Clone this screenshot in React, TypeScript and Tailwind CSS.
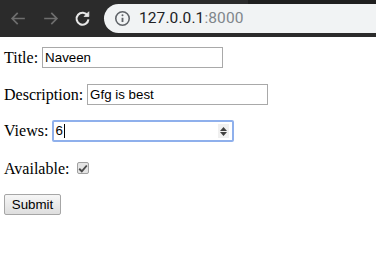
import React from "react";

const serif = { fontFamily: '"Liberation Serif", serif' };
const sans = { fontFamily: '"Liberation Sans", Arial, sans-serif' };

function BrowserBar() {
  return (
    <div className="relative flex h-[37px] items-center bg-[#2b2b2b]">
      <div className="absolute right-0 top-0 h-[4px] w-[128px] bg-[#1f1f1f]" />
      {/* nav buttons */}
      <div className="flex w-[104px] items-center pl-[9px] gap-[13px]">
        <svg width="19" height="19" viewBox="0 0 24 24" fill="none" stroke="#6e6e6e" strokeWidth="2.2">
          <path d="M20 12H5M11 5l-7 7 7 7" />
        </svg>
        <svg width="19" height="19" viewBox="0 0 24 24" fill="none" stroke="#6e6e6e" strokeWidth="2.2">
          <path d="M4 12h15M13 5l7 7-7 7" />
        </svg>
        <svg width="19" height="19" viewBox="0 0 24 24" fill="none" stroke="#e8e8e8" strokeWidth="2.6">
          <path d="M18.5 8.5A7.5 7.5 0 1 0 19.5 13" />
          <path d="M20 3.5v6h-6z" fill="#e8e8e8" strokeWidth="1" />
        </svg>
      </div>
      <div className="flex h-[29px] flex-1 items-center rounded-l-full bg-[#f1f3f4] pl-[10px]">
        <svg width="17" height="17" viewBox="0 0 24 24" fill="none" stroke="#5f6368" strokeWidth="2.2">
          <circle cx="12" cy="12" r="9.5" />
          <path d="M12 11v6" strokeWidth="2.6" />
          <circle cx="12" cy="7.5" r="1.4" fill="#5f6368" stroke="none" />
        </svg>
        <span className="ml-[8px] text-[15.5px] tracking-[0.1px] text-[#202124]" style={{ fontFamily: "Roboto, sans-serif" }}>
          127.0.0.1<span className="text-[#80868b]">:8000</span>
        </span>
      </div>
    </div>
  );
}

function TextInput({ value, width }: { value: string; width: number }) {
  return (
    <div
      className="flex h-[21px] items-center border border-[#a9a9a9] bg-white px-[2px] text-[13.33px] text-black"
      style={{ ...sans, width }}
    >
      {value}
    </div>
  );
}

export default function App() {
  return (
    <div className="h-[268px] w-[376px] overflow-hidden bg-white">
      <BrowserBar />
      <div className="flex flex-col pl-[4px] text-[16px] text-black" style={serif}>
        <div className="mt-[10px] flex h-[21px] items-center gap-[4px]">
          <span>Title:</span>
          <TextInput value="Naveen" width={181} />
        </div>
        <div className="mt-[16px] flex h-[21px] items-center gap-[4px]">
          <span>Description:</span>
          <TextInput value="Gfg is best" width={181} />
        </div>
        <div className="mt-[15px] flex h-[22px] items-center gap-[4px]">
          <span>Views:</span>
          <div
            className="relative flex h-[22px] w-[182px] items-center rounded-[2px] border-2 border-[#8fb0ec] bg-white pl-[1px] text-[13.33px]"
            style={sans}
          >
            <span>6</span>
            <span className="ml-[1px] h-[14px] w-[1px] bg-black" />
            <div className="absolute right-[3px] top-[2px] flex h-[14px] w-[11px] flex-col items-center justify-center gap-[1px] bg-[#f0f0f0]">
              <svg width="7" height="4" viewBox="0 0 7 4"><path d="M0 4L3.5 0L7 4z" fill="#404040" /></svg>
              <svg width="7" height="4" viewBox="0 0 7 4"><path d="M0 0L3.5 4L7 0z" fill="#404040" /></svg>
            </div>
          </div>
        </div>
        <div className="mt-[17px] flex h-[19px] items-center gap-[4px]">
          <span>Available:</span>
          <div className="ml-[4px] mt-[-1px] flex h-[12px] w-[12px] items-center justify-center rounded-[2px] border border-[#a0a0a0] bg-[#e4e4e4]">
            <svg width="10" height="9" viewBox="0 0 10 9">
              <path d="M1.2 4.8L3.8 7.3L8.8 1.5" fill="none" stroke="#4a4a4a" strokeWidth="1.9" />
            </svg>
          </div>
        </div>
        <div className="mt-[16px]">
          <button
            className="flex h-[21px] w-[57px] items-center justify-center rounded-[2px] border border-[#a6a6a6] bg-gradient-to-b from-[#f6f6f6] to-[#dedede] text-[13.33px] text-black"
            style={sans}
          >
            Submit
          </button>
        </div>
      </div>
    </div>
  );
}
